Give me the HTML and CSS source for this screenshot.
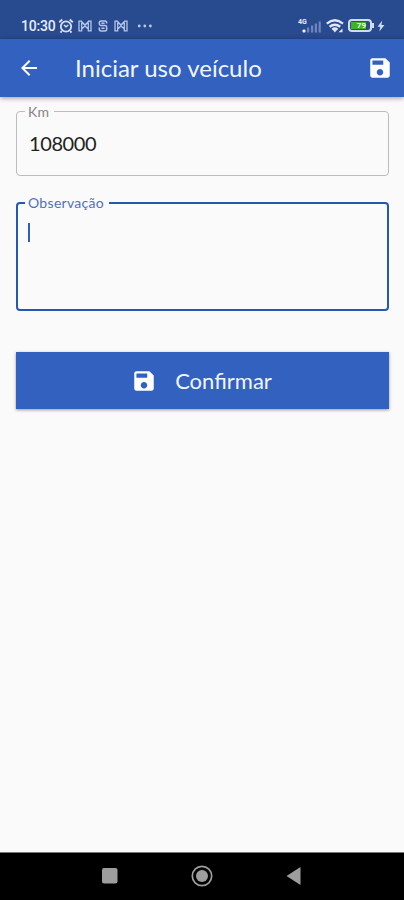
FILE: index.html
```html
<!DOCTYPE html>
<html lang="pt-BR">
  <head>
    <meta charset="utf-8">
    <title>Iniciar uso veículo</title>
    <link rel="stylesheet" href="styles.css">
  </head>

<body>
  <div class="statusbar">
    <span class="time">10:30</span>
    <svg class="alarm" width="16" height="16" viewBox="0 0 16 16" fill="none" stroke="#d5dff5" stroke-width="1.8">
      <circle cx="8" cy="8.5" r="5.2"/>
      <path d="M1.2 4.2 4.3 1.5M14.8 4.2 11.7 1.5M3.8 13l-1.3 1.6M12.2 13l1.3 1.6"/>
      <path d="M6 7l2 1.8L10.3 7" stroke-width="1.5"/>
    </svg>
    <svg class="mail" width="14" height="12" viewBox="0 0 14 12" fill="none" stroke="#b5c5e8" stroke-width="1.3">
      <path d="M1 1.2v9.6h2.7V1.6L7 5l3.3-3.4v9.2H13V1.2h-2L7 5.4 3 1.2zM3.7 9 7 6l3.3 3"/>
    </svg>
    <svg class="app" width="10" height="12" viewBox="0 0 10 12" fill="none" stroke="#b5c5e8" stroke-width="1.5">
      <path d="M8.7 3.5V2.8Q8.7 1 6.9 1H3.1Q1.3 1 1.3 3v.8q0 1.7 1.7 1.7h4q1.7 0 1.7 1.7V9q0 2-1.8 2H3.1Q1.3 11 1.3 9V7.5M3.4 3.3h3.2M3.4 8.3h3.2"/>
    </svg>
    <svg class="mail" width="14" height="12" viewBox="0 0 14 12" fill="none" stroke="#b5c5e8" stroke-width="1.3">
      <path d="M1 1.2v9.6h2.7V1.6L7 5l3.3-3.4v9.2H13V1.2h-2L7 5.4 3 1.2zM3.7 9 7 6l3.3 3"/>
    </svg>
    <svg class="dots" width="16" height="4" viewBox="0 0 16 4" fill="#b9c8e8">
      <circle cx="2.2" cy="2" r="1.4"/>
      <circle cx="7.8" cy="2" r="1.4"/>
      <circle cx="13.4" cy="2" r="1.4"/>
    </svg>

    <div class="signal">
      <span class="network">4G</span>
      <svg width="20" height="14" viewBox="0 0 20 14" fill="#6d87bd">
        <rect x="0.5" y="10.5" width="3" height="3" rx="1" fill="#eef3ff"/>
        <rect x="5" y="8.5" width="2.2" height="5"/>
        <rect x="9" y="6.5" width="2.2" height="7"/>
        <rect x="12.8" y="4.5" width="2.2" height="9"/>
        <rect x="16.6" y="2.5" width="2.2" height="11"/>
      </svg>
    </div>
    <svg class="wifi" width="18" height="14" viewBox="0 0 18 14" fill="none" stroke="#dfe7f8" stroke-width="2.4">
      <path d="M.8 4.6q8-6.6 16.2 0M3.6 7.8q5.3-4.3 10.6 0M6.3 10.6q2.6-2 5.2 0"/>
      <path d="M6.6 10.6h4.6L8.9 13.6z" fill="#dfe7f8" stroke="none"/>
      <path d="M12.5 13.2l4-3.6v3.6z" fill="#dfe7f8" stroke="none"/>
    </svg>
    <div class="battery">
      <span class="charge">79</span>
    </div>
    <div class="battery-tip"></div>
    <svg class="bolt" width="8" height="12" viewBox="0 0 8 12" fill="#d5dff5">
      <path d="M5.2.5.6 6.8h2.7L2.4 11.5 7.4 5H4.4z"/>
    </svg>
  </div>

  <div class="appbar">
    <svg class="back" width="24" height="24" viewBox="0 0 24 24" fill="#fff">
      <path d="M20 11H7.83l5.59-5.59L12 4l-8 8 8 8 1.41-1.41L7.83 13H20v-2z"/>
    </svg>
    <h1 class="title">Iniciar uso veículo</h1>
    <svg class="save" width="26" height="26" viewBox="0 0 24 24" fill="#fff">
      <path d="M17 3H5c-1.11 0-2 .9-2 2v14c0 1.1.89 2 2 2h14c1.1 0 2-.9 2-2V7l-4-4zm-5 16c-1.66 0-3-1.34-3-3s1.34-3 3-3 3 1.34 3 3-1.34 3-3 3zm3-10H5V5h10v4z"/>
    </svg>
  </div>

  <div class="form">
    <fieldset class="field km">
      <legend>Km</legend>
      <div class="value">108000</div>
    </fieldset>

    <fieldset class="field obs">
      <legend>Observação</legend>
      <div class="cursor"></div>
    </fieldset>

    <button class="confirm">
      <svg width="26" height="26" viewBox="0 0 24 24" fill="#fff">
        <path d="M17 3H5c-1.11 0-2 .9-2 2v14c0 1.1.89 2 2 2h14c1.1 0 2-.9 2-2V7l-4-4zm-5 16c-1.66 0-3-1.34-3-3s1.34-3 3-3 3 1.34 3 3-1.34 3-3 3zm3-10H5V5h10v4z"/>
      </svg>
      <span>Confirmar</span>
    </button>
  </div>

  <div class="navbar">
    <svg width="22" height="22" viewBox="0 0 22 22" fill="#9d9d9d">
      <rect x="3" y="3" width="15.5" height="15.5" rx="2"/>
    </svg>
    <svg width="22" height="22" viewBox="0 0 22 22" fill="#9d9d9d">
      <circle cx="11" cy="11" r="9.7" fill="none" stroke="#9d9d9d" stroke-width="1.7"/>
      <circle cx="11" cy="11" r="6"/>
    </svg>
    <svg width="22" height="22" viewBox="0 0 22 22" fill="#9d9d9d">
      <path d="M3.5 11 17.5 2v18z"/>
    </svg>
  </div>
</body>
</html>
```

FILE: styles.css
```css
*{
  box-sizing: border-box;
}
body{
  margin: 0;
  height: 900px;
  display: flex;
  flex-direction: column;
  background-color: #fafafa;
  font-family: Lato, sans-serif;
}
svg{
  display: block;
  flex-shrink: 0;
}

.statusbar{
  height: 39px;
  padding: 12px 19px 0 21px;
  display: flex;
  align-items: center;
  background-color: #284a8f;
  color: #e6edfb;
}
.time{
  width: 37px;
  font-family: Roboto, sans-serif;
  font-size: 14px;
  font-weight: 500;
  letter-spacing: -0.2px;
  white-space: nowrap;
}
.mail{
  margin-left: 4px;
}
.app{
  margin: 0 2px 0 6px;
}
.dots{
  margin-left: 9px;
}
.signal{
  margin-left: auto;
  display: flex;
}
.network{
  width: 4px;
  font-family: Roboto, sans-serif;
  font-size: 7px;
  line-height: 7px;
  font-weight: 700;
}
.wifi{
  margin-left: 4px;
}
.battery{
  width: 24px;
  height: 13px;
  margin-left: 4px;
  padding: 1px;
  border: 2px solid #d3dcee;
  border-radius: 4px;
}
.charge{
  display: block;
  width: 15px;
  height: 7px;
  background-color: #43b02a;
  color: #e9ffe0;
  font-family: Roboto, sans-serif;
  font-size: 8px;
  line-height: 7px;
  font-weight: 700;
  text-align: right;
}
.battery-tip{
  width: 2px;
  height: 5px;
  background-color: #d3dcee;
}
.bolt{
  margin-left: 3px;
}

.appbar{
  height: 58px;
  padding: 0 11px 0 17px;
  display: flex;
  align-items: center;
  background-color: #3361bf;
  box-shadow: 0 1px 5px rgba(0, 0, 0, 0.4);
}
.title{
  margin: 0 auto 0 34px;
  padding-bottom: 1px;
  color: #f1f5ff;
  font-size: 24px;
  font-weight: 400;
}

.form{
  flex: 1;
  padding: 6px 15px 0 16px;
}
.field{
  margin: 0;
  padding: 0 10px;
  border: 1px solid #bcbcbc;
  border-radius: 4px;
}
.field legend{
  margin-left: -2px;
  padding: 0 5px 0 3px;
  font-size: 14px;
  line-height: 17px;
  letter-spacing: 0.3px;
}
.km{
  height: 73px;
}
.km legend{
  color: #858585;
}
.value{
  padding: 11px 0 0 2px;
  color: #222;
  font-size: 20px;
  line-height: 24px;
  letter-spacing: -0.4px;
}
.obs{
  height: 117px;
  margin-top: 18px;
  padding: 0 9px;
  border: 2px solid #2359b3;
}
.obs legend{
  color: #5070bd;
}
.cursor{
  width: 2px;
  height: 19px;
  margin: 12px 0 0 1px;
  background-color: #2f5fb9;
}
.confirm{
  width: 100%;
  height: 57px;
  margin-top: 41px;
  padding: 0 2px 0 0;
  display: flex;
  align-items: center;
  justify-content: center;
  gap: 18px;
  border: none;
  background-color: #3361bf;
  box-shadow: 0 1px 3px rgba(0, 0, 0, 0.4);
  color: #f1f5ff;
  font-family: Lato, sans-serif;
  font-size: 22px;
}

.navbar{
  height: 48px;
  padding-bottom: 1px;
  display: flex;
  align-items: center;
  justify-content: center;
  gap: 70px;
  background-color: #000;
  border-top: 1px solid #777;
}
```
